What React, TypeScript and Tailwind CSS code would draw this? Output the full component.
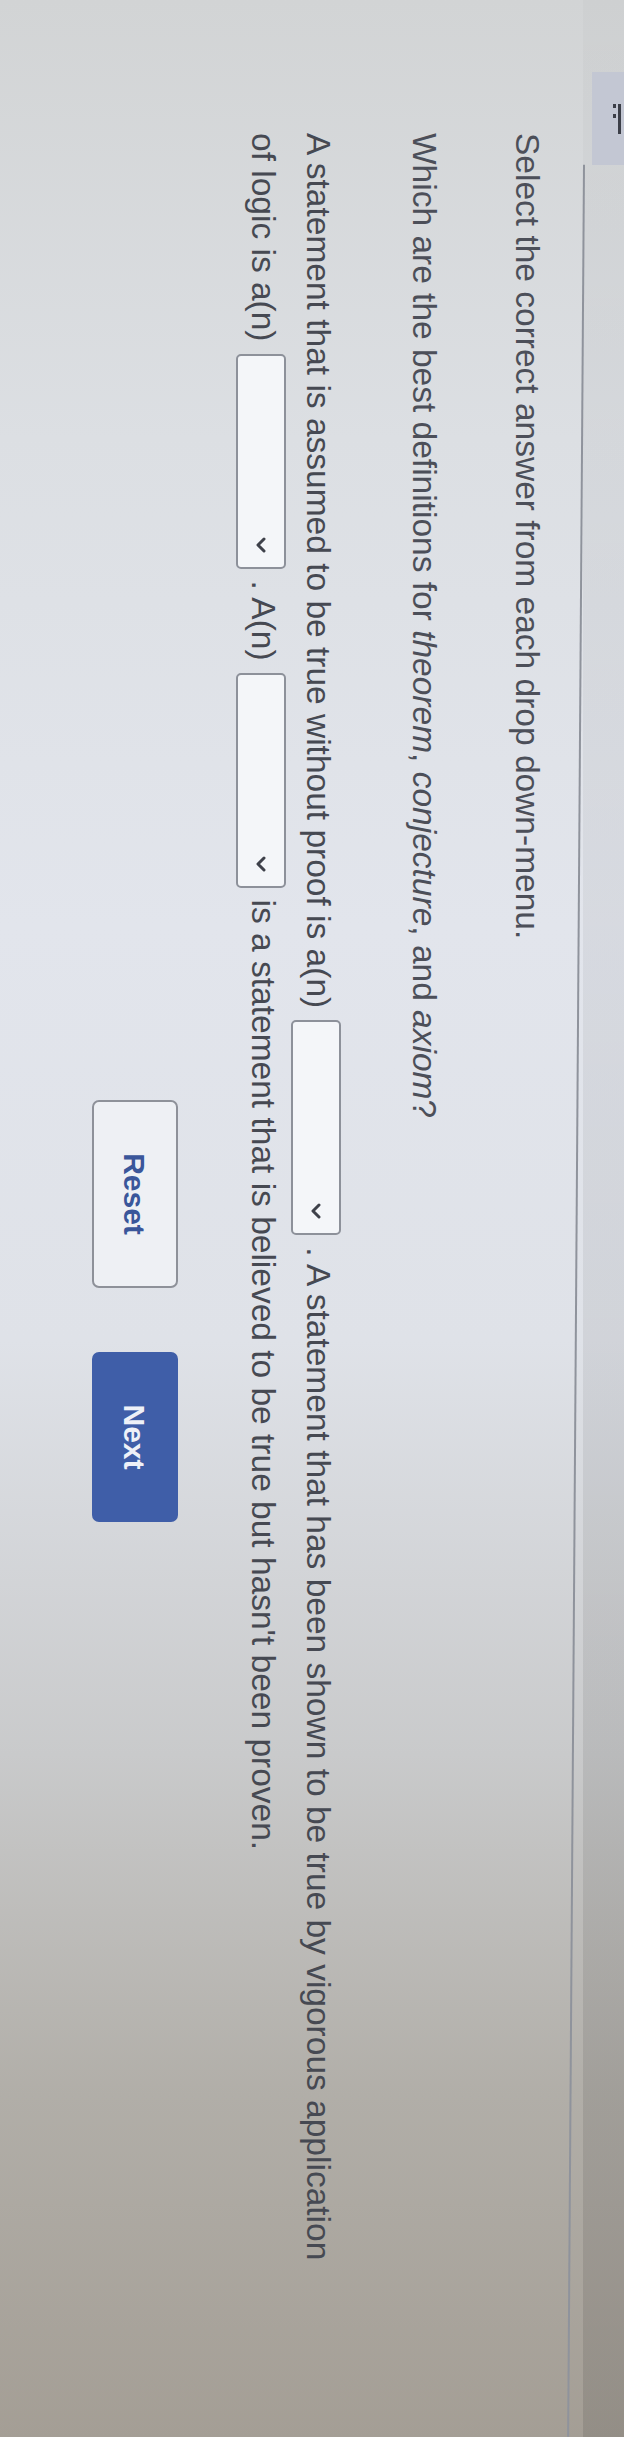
import React from "react";

// Photo of a quiz page, shot sideways: the page is laid out landscape and turned 90deg.

function Dropdown() {
  return (
    <span className="mx-[12px] inline-flex h-[50px] w-[215px] items-center justify-end rounded-[5px] border-2 border-[#8d919a] bg-[#f4f6f9] pr-[14px] align-middle">
      <svg width="16" height="11" viewBox="0 0 16 11" aria-hidden="true">
        <polyline points="2,2 8,8 14,2" fill="none" stroke="#3e414a" strokeWidth="3" strokeLinecap="round" strokeLinejoin="round" />
      </svg>
    </span>
  );
}

export default function App() {
  return (
    <div className="relative h-[2437px] w-[624px] overflow-hidden bg-[linear-gradient(180deg,#d2d4d5_0%,#dcdfe3_18%,#e2e5ec_38%,#dfe2e8_55%,#c9cacb_72%,#b1aea8_86%,#a49e95_100%)]">
      <div className="h-[624px] w-[2437px] origin-top-left translate-x-[624px] rotate-90 font-['Liberation_Sans',Arial,sans-serif] text-[#4a4d57]">
        {/* header strip with tab and rule */}
        <div className="flex h-[41px] bg-[linear-gradient(90deg,rgba(0,0,0,0.02),rgba(0,0,0,0.1))]">
          <div className="w-[72px]" />
          <div className="flex h-[32px] w-[93px] items-start justify-center bg-[#c3c7d3] pt-[2px]">
            <svg width="34" height="10" viewBox="0 0 34 10" aria-hidden="true">
              <rect x="2" y="1" width="30" height="3" fill="#3c3f48" />
              <rect x="2" y="6" width="4" height="3" fill="#3c3f48" />
              <rect x="12" y="6" width="4" height="3" fill="#3c3f48" />
            </svg>
          </div>
          <div className="flex-1 origin-left rotate-[0.4deg] border-b-2 border-[#8f939c]" />
        </div>

        <div className="pl-[133px]">
          <p className="mt-[36px] text-[33.5px] leading-[40px] text-[#4c4f59]">
            Select the correct answer from each drop down-menu.
          </p>

          <p className="mt-[63px] text-[33.5px] leading-[40px] text-[#4c4f59]">
            Which are the best definitions for <i>theorem</i>, <i>conjecture</i>, and <i>axiom</i>?
          </p>

          <p className="mt-[58px] w-[2150px] text-[33.5px] leading-[55px] text-[#464952]">
            A statement that is assumed to be true without proof is a(n)
            <Dropdown />. A statement that has been shown to be true by vigorous application of logic is a(n)
            <Dropdown />. A(n)
            <Dropdown />
            is a statement that is believed to be true but hasn&apos;t been proven.
          </p>

          <div className="mt-[58px] flex gap-[64px] pl-[967px]">
            <button className="h-[86px] w-[188px] rounded-[7px] border-2 border-[#8e9199] bg-[#eef0f4] text-[30px] font-bold text-[#3a569a]">
              Reset
            </button>
            <button className="h-[86px] w-[170px] rounded-[7px] bg-[#3f5ea8] text-[30px] font-bold text-[#eef1f8]">
              Next
            </button>
          </div>
        </div>
      </div>
    </div>
  );
}
